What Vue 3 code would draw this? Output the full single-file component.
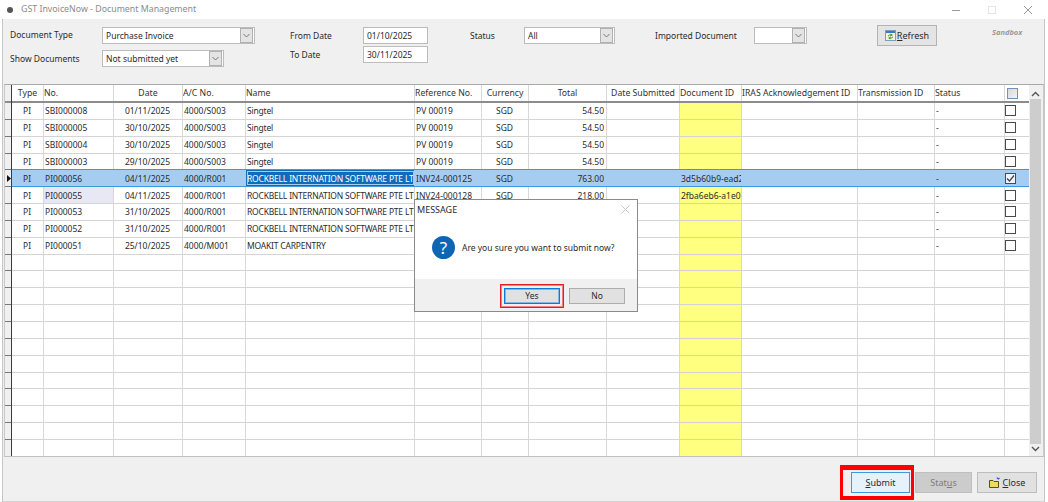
<script setup>
const columns = [
  { key: 'type', label: 'Type', cls: 'center' },
  { key: 'no', label: 'No.', cls: '' },
  { key: 'date', label: 'Date', cls: 'center' },
  { key: 'ac', label: 'A/C No.', cls: '' },
  { key: 'name', label: 'Name', cls: 'name' },
  { key: 'ref', label: 'Reference No.', cls: '' },
  { key: 'cur', label: 'Currency', cls: 'center' },
  { key: 'total', label: 'Total', cls: 'right', headCls: 'center' },
  { key: 'submitted', label: 'Date Submitted', cls: '', headCls: 'center' },
  { key: 'docId', label: 'Document ID', cls: 'doc' },
  { key: 'iras', label: 'IRAS Acknowledgement ID', cls: '' },
  { key: 'trans', label: 'Transmission ID', cls: '' },
  { key: 'status', label: 'Status', cls: '' }
];

const rock = 'ROCKBELL INTERNATION SOFTWARE PTE LTD';
const filled = [
  { no: 'SBI000008', date: '01/11/2025', ac: '4000/S003', name: 'Singtel', ref: 'PV 00019', cur: 'SGD', total: '54.50' },
  { no: 'SBI000005', date: '30/10/2025', ac: '4000/S003', name: 'Singtel', ref: 'PV 00019', cur: 'SGD', total: '54.50' },
  { no: 'SBI000004', date: '30/10/2025', ac: '4000/S003', name: 'Singtel', ref: 'PV 00019', cur: 'SGD', total: '54.50' },
  { no: 'SBI000003', date: '29/10/2025', ac: '4000/S003', name: 'Singtel', ref: 'PV 00019', cur: 'SGD', total: '54.50' },
  { no: 'PI000056', date: '04/11/2025', ac: '4000/R001', name: rock, ref: 'INV24-000125', cur: 'SGD', total: '763.00', docId: '3d5b60b9-ead2', selected: true },
  { no: 'PI000055', date: '04/11/2025', ac: '4000/R001', name: rock, ref: 'INV24-000128', cur: 'SGD', total: '218.00', docId: '2fba6eb6-a1e0', shadeNo: true },
  // the dialog hides the rest of these three rows
  { no: 'PI000053', date: '31/10/2025', ac: '4000/R001', name: rock },
  { no: 'PI000052', date: '31/10/2025', ac: '4000/R001', name: rock },
  { no: 'PI000051', date: '25/10/2025', ac: '4000/M001', name: 'MOAKIT CARPENTRY' }
].map((r) => ({ ...r, type: 'PI', status: '-', used: true }));

const rows = [...filled, ...Array.from({ length: 12 }, () => ({ used: false }))];
</script>

<template>
  <div class="window">
    <header class="titlebar">
      <span class="app-dot"></span>
      <span class="title">GST InvoiceNow - Document Management</span>
      <div class="win-controls">
        <svg width="10" height="10" viewBox="0 0 10 10"><path d="M1 5.500h8" stroke="#9a9a9a" /></svg>
        <svg width="10" height="10" viewBox="0 0 10 10"><rect x="1.500" y="1.500" width="7" height="7" fill="none" stroke="#e4e4e4" /></svg>
        <svg width="10" height="10" viewBox="0 0 10 10"><path d="M1 1l8 8M9 1l-8 8" stroke="#9a9a9a" /></svg>
      </div>
    </header>

    <main class="body">
      <section class="filters">
        <div class="group group-type">
          <label class="lbl">Document Type</label>
          <div class="combo combo-type"><span>Purchase Invoice</span><i class="drop"><svg width="7" height="5" viewBox="0 0 7 5"><path d="M.5 1l3 3 3-3" fill="none" stroke="#777" /></svg></i></div>
          <label class="lbl">Show Documents</label>
          <div class="combo combo-show"><span>Not submitted yet</span><i class="drop"><svg width="7" height="5" viewBox="0 0 7 5"><path d="M.5 1l3 3 3-3" fill="none" stroke="#777" /></svg></i></div>
        </div>
        <div class="group group-date">
          <label class="lbl">From Date</label>
          <div class="text-input">01/10/2025</div>
          <label class="lbl">To Date</label>
          <div class="text-input">30/11/2025</div>
        </div>
        <div class="group group-status">
          <label class="lbl">Status</label>
          <div class="combo combo-status"><span>All</span><i class="drop"><svg width="7" height="5" viewBox="0 0 7 5"><path d="M.5 1l3 3 3-3" fill="none" stroke="#777" /></svg></i></div>
        </div>
        <div class="group group-import">
          <label class="lbl">Imported Document</label>
          <div class="combo combo-import"><span></span><i class="drop"><svg width="7" height="5" viewBox="0 0 7 5"><path d="M.5 1l3 3 3-3" fill="none" stroke="#777" /></svg></i></div>
        </div>
        <button class="btn btn-refresh">
          <svg width="11" height="11" viewBox="0 0 11 11">
            <rect x=".5" y=".5" width="10" height="10" fill="#f6f3d2" stroke="#7d9cc4" />
            <rect x="1" y="1" width="9" height="2" fill="#3b78c8" />
            <path d="M3 6.200q1-1.700 3-1.200M8 6.800q-1 1.700-3 1.200" fill="none" stroke="#2f9a2f" />
            <path d="M5.500 3.500l2.500 1.500-2.500 1.500zM5.500 6.500l-2.500 1.500 2.500 1.500z" fill="#2f9a2f" />
          </svg>
          <span><u>R</u>efresh</span>
        </button>
        <span class="sandbox">Sandbox</span>
      </section>

      <section class="grid">
        <div class="grid-main">
          <div class="row-heads">
            <div class="rh-top"></div>
            <div v-for="(row, i) in rows" :key="i" class="rh">
              <svg v-if="row.selected" width="4" height="7" viewBox="0 0 4 7"><path d="M0 0l4 3.500L0 7z" fill="#111" /></svg>
            </div>
          </div>
          <div class="table">
            <div class="tr head">
              <div v-for="col in columns" :key="col.key" class="td" :class="col.headCls || (col.cls === 'doc' || col.cls === 'name' ? '' : col.cls)">{{ col.label }}</div>
              <div class="td check-cell"><span class="head-check"></span></div>
            </div>
            <div v-for="(row, i) in rows" :key="i" class="tr" :class="{ selected: row.selected }">
              <div
                v-for="col in columns"
                :key="col.key"
                class="td"
                :class="[col.cls, { 'shade-no': row.shadeNo && col.key === 'no', 'active-name': row.selected && col.key === 'name' }]"
              >
                <span class="clip">{{ row[col.key] }}</span>
              </div>
              <div class="td check-cell">
                <span v-if="row.used" class="check">
                  <svg v-if="row.selected" width="9" height="9" viewBox="0 0 9 9"><path d="M1 4.500l2.500 2.500 4.500-5.500" fill="none" stroke="#444" stroke-width="1.200" /></svg>
                </span>
              </div>
            </div>
          </div>
        </div>
        <div class="scrollbar">
          <svg width="9" height="6" viewBox="0 0 9 6"><path d="M1 5l3.500-3.500L8 5" fill="none" stroke="#555" stroke-width="1.400" /></svg>
          <div class="thumb"></div>
          <svg width="9" height="6" viewBox="0 0 9 6"><path d="M1 1l3.500 3.500L8 1" fill="none" stroke="#555" stroke-width="1.400" /></svg>
        </div>
      </section>

      <footer class="actions">
        <div class="red-box">
          <button class="btn btn-submit"><span><u>S</u>ubmit</span></button>
        </div>
        <button class="btn btn-status" disabled><span>Stat<u>u</u>s</span></button>
        <button class="btn btn-close">
          <svg width="11" height="11" viewBox="0 0 11 11">
            <path d="M.5 3.500h3.500l1 1h4.500v6H.5z" fill="#ecdc5a" stroke="#55521f" />
            <path d="M8 .5l.8 1.500M10.500 1L9 2.200" stroke="#2a55d8" stroke-width="1.200" />
          </svg>
          <span><u>C</u>lose</span>
        </button>
      </footer>
    </main>

    <div class="dialog">
      <div class="dialog-title">
        <span>MESSAGE</span>
        <svg width="9" height="9" viewBox="0 0 9 9"><path d="M.5.5l8 8M8.500.5l-8 8" stroke="#c8c8c8" /></svg>
      </div>
      <div class="dialog-body">
        <span class="q-icon">?</span>
        <span>Are you sure you want to submit now?</span>
      </div>
      <div class="dialog-foot">
        <div class="yes-box"><button class="btn dlg-btn dlg-yes">Yes</button></div>
        <button class="btn dlg-btn">No</button>
      </div>
    </div>
  </div>
</template>

<style>
html,
body {
  margin: 0;
  background: #fff;
  overflow: hidden;
}
</style>

<style scoped>
.window {
  position: relative;
  width: 1048px;
  height: 502px;
  display: flex;
  flex-direction: column;
  background: #fff;
  font-family: 'Noto Sans', 'Open Sans', sans-serif;
  font-size: 8.5px;
  color: #2b2b2b;
  overflow: hidden;
}

.titlebar {
  height: 19px;
  flex: none;
  display: flex;
  align-items: center;
  padding-left: 7px;
}

.app-dot {
  width: 6px;
  height: 6px;
  border-radius: 50%;
  background: #555;
  margin-right: 8px;
}

.title {
  font-size: 8.800px;
  color: #8b8b8b;
  margin-top: -1px;
}

.win-controls {
  margin-left: auto;
  display: flex;
  gap: 26px;
  padding-right: 15px;
}

.body {
  flex: 1;
  display: flex;
  flex-direction: column;
  width: 1043px;
  margin-left: 2px;
  background: #f0f0f0;
  border-left: 1px solid #c6c6c6;
  border-right: 1px solid #c6c6c6;
  border-bottom: 1px solid #d4d4d4;
  box-sizing: border-box;
}

.filters {
  height: 65px;
  flex: none;
  display: flex;
  align-items: flex-start;
  padding-top: 8px;
  padding-left: 7px;
  box-sizing: border-box;
}

.group {
  display: grid;
  align-items: center;
}

.group-type {
  width: 280px;
  grid-template-columns: 92px auto;
  row-gap: 6px;
  justify-items: start;
}

.group-date {
  width: 180px;
  grid-template-columns: 73px 65px;
  row-gap: 2px;
}

.group-status {
  width: 185px;
  grid-template-columns: 54px 91px;
}

.group-import {
  width: 222px;
  grid-template-columns: 99px 53px;
}

.lbl {
  white-space: nowrap;
}

.group-type .lbl:first-child {
  margin-top: -2px;
}

.combo,
.text-input {
  height: 17px;
  box-sizing: border-box;
  background: #fff;
  border: 1px solid #bcbcbc;
  display: flex;
  align-items: center;
  padding-left: 3px;
  white-space: nowrap;
}

.combo span {
  flex: 1;
}

.combo-type {
  width: 153px;
  padding-right: 1px;
}

.combo-show {
  width: 122px;
  padding-right: 1px;
}

.combo-status {
  width: 91px;
  padding-right: 1px;
}

.combo-import {
  width: 53px;
  padding-right: 1px;
}

.drop {
  width: 13px;
  height: 15px;
  flex: none;
  display: flex;
  align-items: center;
  justify-content: center;
  box-sizing: border-box;
  background: #e4e4e4;
  border: 1px solid #b0b0b0;
}

.btn {
  font: inherit;
  color: inherit;
  padding: 0;
  box-sizing: border-box;
  background: #e1e1e1;
  border: 1px solid #adadad;
  display: flex;
  align-items: center;
  justify-content: center;
}

.btn-refresh {
  width: 60px;
  height: 21px;
  margin-top: -2px;
  gap: 1px;
  font-size: 9px;
  background: #e4e4e4;
  border: 1px solid #b4b4b4;
}

.sandbox {
  margin-left: 55px;
  font-size: 7.500px;
  font-style: italic;
  font-weight: 700;
  color: #9a9a9a;
}

.grid {
  flex: none;
  height: 373px;
  margin-left: 1px;
  width: 1040px;
  display: flex;
  box-sizing: border-box;
  background: #fff;
  border-top: 1px solid #a8a8a8;
  border-right: 1px solid #c8c8c8;
  border-bottom: 1px solid #c0c0c0;
  border-left: 1px solid #c8c8c8;
}

.grid-main {
  flex: 1;
  display: flex;
  min-width: 0;
  overflow: hidden;
}

.row-heads {
  width: 6px;
  flex: none;
  background: #f0f0f0;
  border-right: 1px solid #3c3c3c;
}

.rh-top {
  height: 18px;
  box-sizing: border-box;
  border-bottom: 2px solid #8c8c8c;
}

.rh {
  height: 16.850px;
  box-sizing: border-box;
  border-bottom: 1px solid #777;
  display: flex;
  align-items: center;
  justify-content: flex-end;
}

.table {
  flex: 1;
  min-width: 0;
}

.tr {
  display: grid;
  grid-template-columns: 32px 70px 69px 63px 169px 67px 47px 78px 73px 62px 116px 77px 70px 24px;
  height: 16.850px;
  box-sizing: border-box;
  border-bottom: 1px solid #d4d4d4;
  align-items: stretch;
}

.tr.head {
  height: 18px;
  border-bottom: 2px solid #8c8c8c;
  color: #333;
  font-size: 8.700px;
}

.td {
  min-width: 0;
  display: flex;
  align-items: center;
  padding: 0 2px 0 1px;
  border-right: 1px solid #d8d8d8;
  white-space: nowrap;
  overflow: hidden;
  box-sizing: border-box;
}

.head .td {
  padding: 0;
}

.clip {
  overflow: hidden;
  display: block;
  width: 100%;
}

.center {
  justify-content: center;
  text-align: center;
}

.right {
  justify-content: flex-end;
  text-align: right;
}

.name {
  letter-spacing: -0.2px;
  padding-right: 0;
}

.doc {
  background: #ffff80;
  padding-right: 0;
}

.shade-no {
  background: #e8e8f4;
}

.selected {
  background: #a6cdf0;
  border-top: 1px solid #3f97dd;
  border-bottom: 1px solid #3f97dd;
  height: 17.850px;
  margin-top: -1px;
}

.selected .td {
  border-right-color: #a6cdf0;
}

.selected .doc {
  background: transparent;
}

.selected .active-name {
  background: #0f6cbd;
  color: #fff;
  outline: 1px solid #a6cdf0;
  outline-offset: -2px;
}

.check-cell {
  padding: 0;
  border-right: none;
}

.check {
  width: 11px;
  height: 11px;
  box-sizing: border-box;
  border: 1px solid #4a4a4a;
  background: #fff;
  display: flex;
  align-items: center;
  justify-content: center;
}

.check svg {
  flex: none;
}

.selected .check {
  background: #eef4fb;
}

.head-check {
  width: 11px;
  height: 11px;
  margin-left: 2px;
  box-sizing: border-box;
  border: 1px solid #6f93b8;
  background: linear-gradient(135deg, #d8d8d8, #f4f4f4);
}

.scrollbar {
  width: 14px;
  flex: none;
  background: #f0f0f0;
  display: flex;
  flex-direction: column;
  align-items: center;
  padding: 6px 1px 4px 0;
  box-sizing: border-box;
  gap: 2px;
}

.thumb {
  flex: 1;
  width: 11px;
  background: #cdcdcd;
}

.actions {
  flex: 1;
  display: flex;
  justify-content: flex-end;
  align-items: flex-start;
  padding-top: 8px;
  padding-right: 7px;
}

.red-box {
  border-style: solid;
  border-color: #f00;
  border-width: 5px 3px 4px;
  padding: 2px 1px 3px 8px;
  margin-right: 1px;
  display: flex;
}

.actions > .btn {
  margin-top: 7px;
}

.actions .btn {
  height: 21px;
  font-size: 9px;
}

.btn-submit {
  width: 59px;
  background: #e5f1fb;
  border: 1px solid #3f97dd;
}

.btn-status {
  width: 57px;
  background: #cccccc;
  border: 1px solid #bfbfbf;
  color: #7c7c7c;
}

.btn-close {
  width: 60px;
  margin-left: 5px;
  gap: 3px;
  background: #e1e1e1;
  border: 1px solid #bdbdbd;
}

.dialog {
  position: absolute;
  left: 414px;
  top: 199px;
  width: 224px;
  height: 113px;
  box-sizing: border-box;
  display: flex;
  flex-direction: column;
  background: #fff;
  border: 1px solid #8a8a8a;
}

.dialog-title {
  display: flex;
  align-items: center;
  justify-content: space-between;
  height: 18px;
  padding: 0 7px 0 2px;
  flex: none;
  font-size: 9px;
}

.dialog-body {
  flex: 1;
  display: flex;
  align-items: center;
  gap: 7px;
  padding-left: 17px;
  font-size: 8.500px;
  padding-bottom: 3px;
}

.q-icon {
  width: 23px;
  height: 23px;
  border-radius: 50%;
  background: #0f64b4;
  color: #fff;
  font-size: 17px;
  line-height: 23px;
  text-align: center;
  flex: none;
}

.dialog-foot {
  height: 32px;
  flex: none;
  background: #f0f0f0;
  display: flex;
  justify-content: flex-end;
  align-items: center;
  gap: 5px;
  padding-right: 12px;
  padding-top: 1px;
  box-sizing: border-box;
}

.yes-box {
  border: 1px solid #e81c24;
  padding: 3px;
  box-shadow: inset 0 0 0 1px #f08080;
}

.dlg-btn {
  width: 56px;
  height: 16px;
  font-size: 8.500px;
  background: #e1e1e1;
  border: 1px solid #adadad;
}

.dlg-yes {
  border: 1px solid #0f78d4;
  box-shadow: inset 0 0 0 1px #7db9ea;
}
</style>
